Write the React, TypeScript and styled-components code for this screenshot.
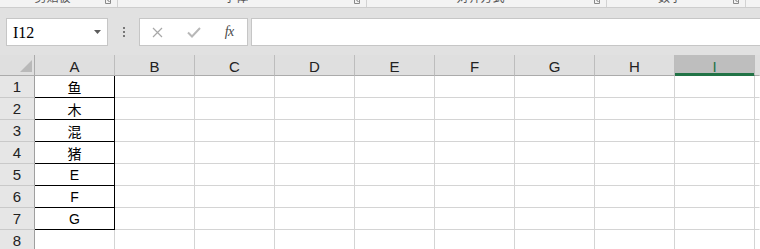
import React from 'react';
import styled, { createGlobalStyle, css } from 'styled-components';

const GlobalStyle = createGlobalStyle`
  html, body {
    margin: 0;
    padding: 0;
    background: #ffffff;
  }
  body {
    font-family: 'Liberation Sans', 'Noto Sans CJK SC', sans-serif;
  }
`;

const ribbonGroups = [
  { label: '剪贴板', width: 118 },
  { label: '字体', width: 249 },
  { label: '对齐方式', width: 240 },
  { label: '数字', width: 139 },
];

const columns = ['A', 'B', 'C', 'D', 'E', 'F', 'G', 'H', 'I'];
const selectedColumn = 'I';

const columnA = ['鱼', '木', '混', '猪', 'E', 'F', 'G', ''];

export default function App() {
  return (
    <>
      <GlobalStyle />
      <Window>
        <RibbonStrip>
          {ribbonGroups.map((group) => (
            <RibbonGroup key={group.label} $width={group.width}>
              <GroupLabel>{group.label}</GroupLabel>
              <Launcher viewBox="0 0 6 4">
                <path d="M0.5 0 V3.5 H5.5 V0" fill="none" stroke="#8a8a8a" strokeWidth="1" />
                <path d="M2.5 0 L4.5 2" stroke="#6a6a6a" strokeWidth="1" />
              </Launcher>
            </RibbonGroup>
          ))}
        </RibbonStrip>

        <FormulaArea>
          <NameBox>
            <span>I12</span>
            <DropArrow viewBox="0 0 7 4">
              <path d="M0 0 H7 L3.5 4 Z" fill="#5c5c5c" />
            </DropArrow>
          </NameBox>
          <Grip>
            <i />
            <i />
            <i />
          </Grip>
          <FxBox>
            <FxSlot>
              <svg width="11" height="11" viewBox="0 0 11 11">
                <path d="M1 1 L10 10 M10 1 L1 10" stroke="#a8a8a8" strokeWidth="1.2" />
              </svg>
            </FxSlot>
            <FxSlot>
              <svg width="14" height="11" viewBox="0 0 14 11">
                <path d="M1 5.5 L5 9.5 L13 1" fill="none" stroke="#b8b8b8" strokeWidth="2" />
              </svg>
            </FxSlot>
            <FxSlot>
              <FxText>fx</FxText>
            </FxSlot>
          </FxBox>
          <FormulaInput />
        </FormulaArea>

        <Sheet>
          <Corner>
            <svg width="12" height="12" viewBox="0 0 12 12">
              <path d="M12 0 V12 H0 Z" fill="#b9b9b9" />
            </svg>
          </Corner>
          {columns.map((col) => (
            <ColumnHeader key={col} $selected={col === selectedColumn}>
              {col}
            </ColumnHeader>
          ))}
          <ColumnHeader $last />

          {columnA.map((value, i) => {
            const bordered = i < 7;
            return (
              <React.Fragment key={i}>
                <RowHeader>{i + 1}</RowHeader>
                <Cell $bordered={bordered}>{value}</Cell>
                {columns.slice(1).map((col) => (
                  <Cell key={col} />
                ))}
                <Cell $last />
              </React.Fragment>
            );
          })}
        </Sheet>
      </Window>
    </>
  );
}

const Window = styled.div`
  width: 760px;
  height: 249px;
  overflow: hidden;
  display: flex;
  flex-direction: column;
  background: #e1e1e1;
`;

const RibbonStrip = styled.div`
  height: 7px;
  flex-shrink: 0;
  display: flex;
  overflow: hidden;
  background: #f3f3f3;
  border-bottom: 1px solid #cdcdcd;
`;

const RibbonGroup = styled.div<{ $width: number }>`
  width: ${({ $width }) => $width}px;
  flex-shrink: 0;
  display: flex;
  align-items: flex-start;
  border-right: 1px solid #d2d2d2;
  box-sizing: border-box;
  padding-right: 6px;
`;

const GroupLabel = styled.div`
  flex: 1;
  text-align: center;
  margin-top: -9px;
  font-family: 'Noto Sans CJK SC', sans-serif;
  font-size: 12px;
  line-height: 12px;
  color: #555555;
`;

const Launcher = styled.svg`
  width: 6px;
  height: 4px;
  flex-shrink: 0;
`;

const FormulaArea = styled.div`
  height: 47px;
  flex-shrink: 0;
  box-sizing: border-box;
  padding: 10px 0 0 6px;
  display: flex;
  align-items: flex-start;
`;

const boxBase = css`
  height: 28px;
  box-sizing: border-box;
  border: 1px solid #c6c6c6;
  background: #ffffff;
`;

const NameBox = styled.div`
  ${boxBase};
  width: 102px;
  flex-shrink: 0;
  display: flex;
  align-items: center;
  justify-content: space-between;
  padding: 0 6px 0 6px;
  font-family: 'Liberation Serif', serif;
  font-size: 16px;
  color: #000000;

  & > span {
    margin-top: 1px;
  }
`;

const DropArrow = styled.svg`
  width: 7px;
  height: 4px;
`;

const Grip = styled.div`
  width: 31px;
  height: 28px;
  flex-shrink: 0;
  display: flex;
  flex-direction: column;
  align-items: center;
  justify-content: center;
  gap: 2px;

  & > i {
    display: block;
    width: 2px;
    height: 2px;
    background: #777777;
  }
`;

const FxBox = styled.div`
  ${boxBase};
  width: 109px;
  flex-shrink: 0;
  display: flex;
  align-items: center;
`;

const FxSlot = styled.div`
  flex: 1;
  height: 100%;
  display: flex;
  align-items: center;
  justify-content: center;
`;

const FxText = styled.span`
  font-family: 'Liberation Serif', serif;
  font-style: italic;
  font-size: 14px;
  color: #4a4a4a;
  letter-spacing: -0.5px;
`;

const FormulaInput = styled.div`
  ${boxBase};
  flex: 1;
  margin-left: 3px;
  margin-right: -4px;
`;

const Sheet = styled.div`
  flex: 1;
  display: grid;
  grid-template-columns: 35px repeat(9, 80px) 1fr;
  grid-template-rows: 21px;
  grid-auto-rows: 22px;
  background: #ffffff;
  font-family: 'Liberation Sans', 'Noto Sans CJK SC', sans-serif;
`;

const Corner = styled.div`
  box-sizing: border-box;
  background: #dfdfdf;
  border-right: 1px solid #ababab;
  border-bottom: 1px solid #ababab;
  display: flex;
  align-items: flex-end;
  justify-content: flex-end;
  padding: 0 2px 3px 0;
`;

const ColumnHeader = styled.div<{ $selected?: boolean; $last?: boolean }>`
  box-sizing: border-box;
  background: #dfdfdf;
  border-right: 1px solid ${({ $last }) => ($last ? 'transparent' : '#bdbdbd')};
  border-bottom: 1px solid #ababab;
  display: flex;
  align-items: center;
  justify-content: center;
  font-size: 15px;
  color: #222222;
  padding-top: 2px;

  ${({ $selected }) =>
    $selected &&
    css`
      background: #bebebe;
      color: #217346;
      border-bottom-color: #217346;
      box-shadow: inset 0 -2px 0 #217346;
    `};
`;

const RowHeader = styled.div`
  box-sizing: border-box;
  background: #e6e6e6;
  border-right: 1px solid #9f9f9f;
  border-bottom: 1px solid #c9c9c9;
  display: flex;
  align-items: center;
  justify-content: center;
  font-size: 15px;
  color: #222222;
`;

const Cell = styled.div<{ $bordered?: boolean; $last?: boolean }>`
  box-sizing: border-box;
  border-right: 1px solid ${({ $last }) => ($last ? 'transparent' : '#d4d4d4')};
  border-bottom: 1px solid #d4d4d4;
  display: flex;
  align-items: center;
  justify-content: center;
  font-size: 14px;
  color: #000000;

  ${({ $bordered }) =>
    $bordered &&
    css`
      border-right-color: #000000;
      border-bottom-color: #000000;
    `};
`;
